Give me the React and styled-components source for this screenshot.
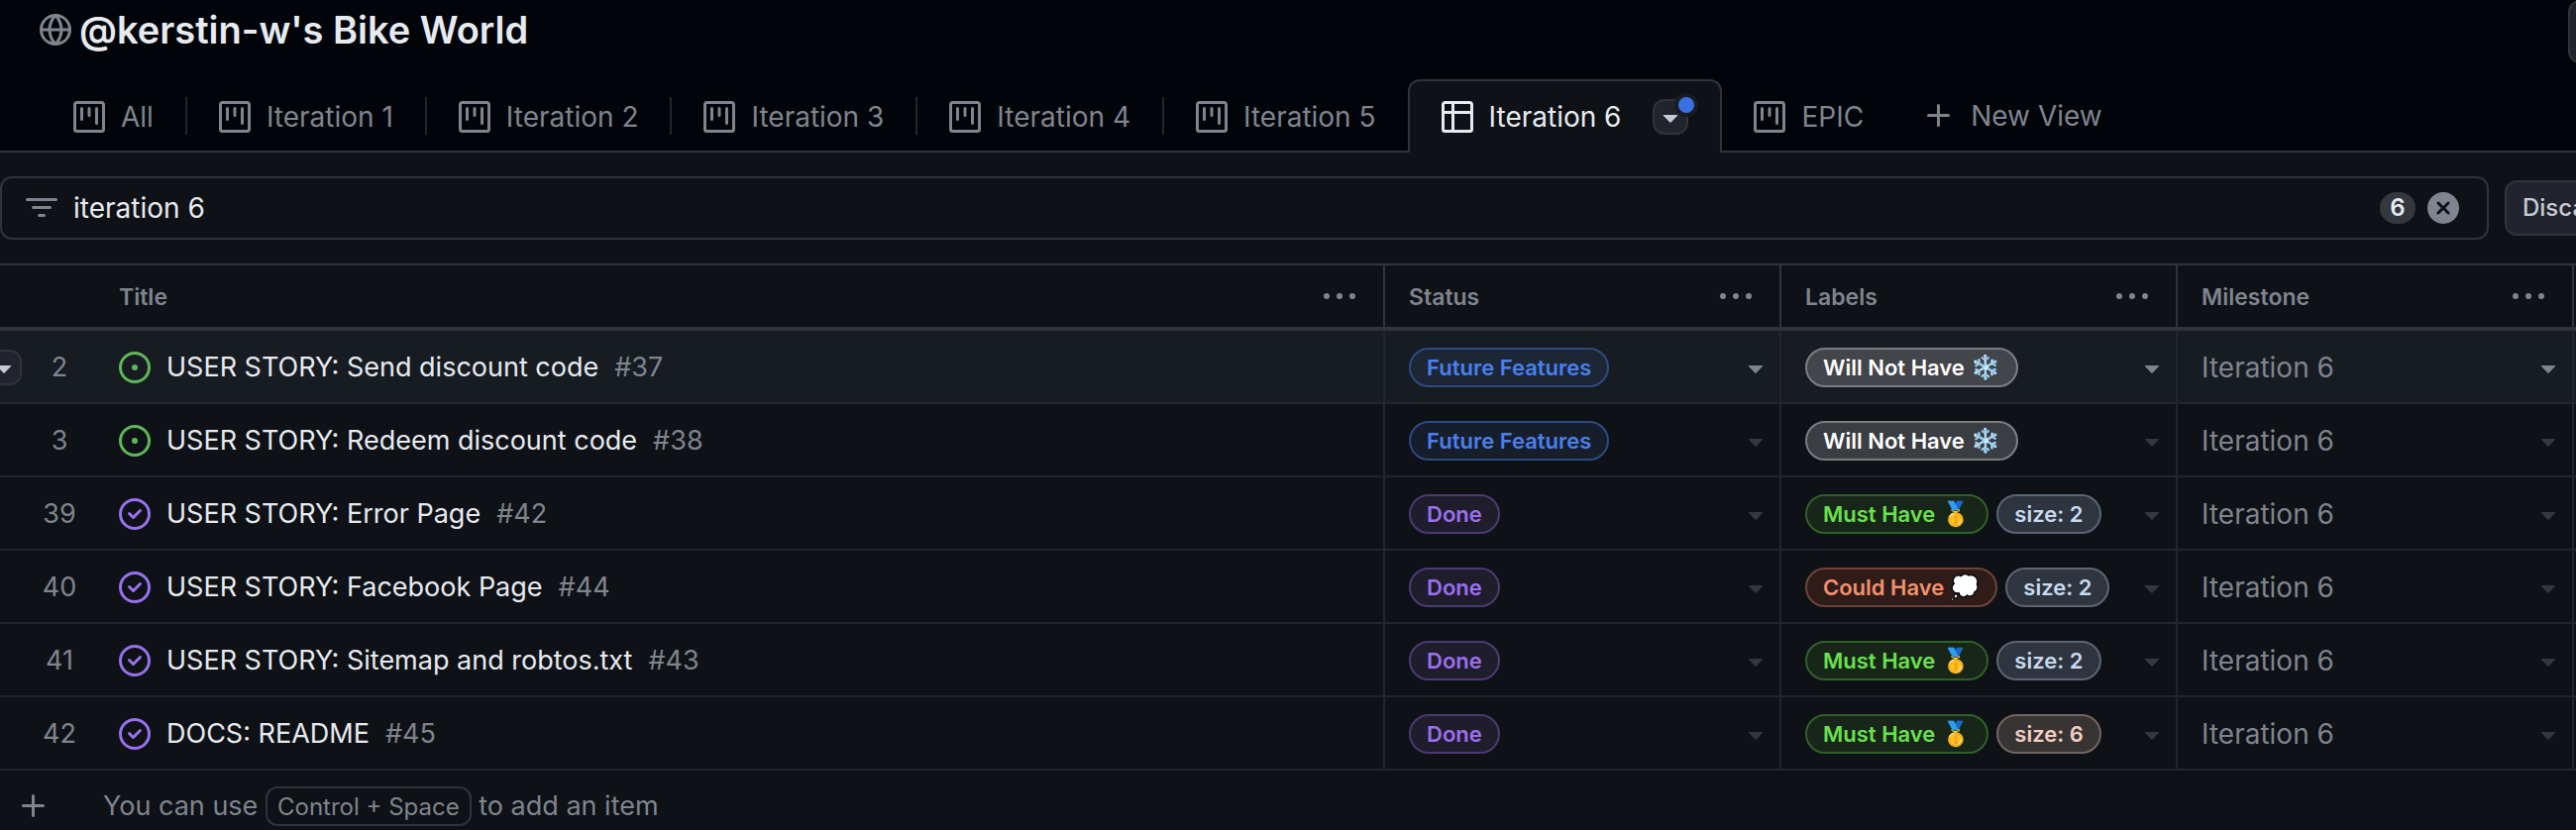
import React from "react";
import styled, { createGlobalStyle, css } from "styled-components";

const c = {
  header: "#010409",
  canvas: "#0e1116",
  subtle: "#171b22",
  button: "#21242c",
  border: "#30343a",
  rowBorder: "#222529",
  text: "#e7ebf0",
  muted: "#7f858e",
  faint: "#34383d",
};

const GlobalStyle = createGlobalStyle`
  *, *::before, *::after { box-sizing: border-box; }
  body {
    margin: 0;
    background: ${c.canvas};
    color: ${c.text};
    font-family: Inter, "Liberation Sans", sans-serif;
    font-size: 28px;
    line-height: 40px;
  }
  button, input { font: inherit; color: inherit; }
  button { cursor: pointer; }
`;

/* ---------- icons (16-unit grid) ---------- */

const Svg = styled.svg`
  display: block;
  flex: none;
  width: 32px;
  height: 32px;
  fill: currentColor;
`;

const paths = {
  globe:
    "M8 0a8 8 0 1 1 0 16A8 8 0 0 1 8 0ZM5.78 8.75a9.64 9.64 0 0 0 1.363 4.177c.255.426.542.832.857 1.215.245-.296.551-.705.857-1.215A9.64 9.64 0 0 0 10.22 8.75Zm4.44-1.5a9.64 9.64 0 0 0-1.363-4.177c-.307-.51-.612-.919-.857-1.215a9.927 9.927 0 0 0-.857 1.215A9.64 9.64 0 0 0 5.78 7.25Zm-5.944 1.5H1.543a6.507 6.507 0 0 0 4.666 5.5c-.123-.181-.24-.365-.352-.552-.715-1.192-1.437-2.874-1.581-4.948Zm-2.733-1.5h2.733c.144-2.074.866-3.756 1.58-4.948.12-.197.237-.381.353-.552a6.507 6.507 0 0 0-4.666 5.5Zm10.181 1.5c-.144 2.074-.866 3.756-1.58 4.948-.12.197-.237.381-.353.552a6.507 6.507 0 0 0 4.666-5.5Zm2.733-1.5a6.507 6.507 0 0 0-4.666-5.5c.123.181.24.365.353.552.714 1.192 1.436 2.874 1.58 4.948Z",
  project:
    "M1.75 0h12.5C15.216 0 16 .784 16 1.75v12.5A1.75 1.75 0 0 1 14.25 16H1.75A1.75 1.75 0 0 1 0 14.25V1.75C0 .784.784 0 1.75 0ZM1.5 1.75v12.5c0 .138.112.25.25.25h12.5a.25.25 0 0 0 .25-.25V1.75a.25.25 0 0 0-.25-.25H1.75a.25.25 0 0 0-.25.25ZM11.75 3a.75.75 0 0 1 .75.75v7.5a.75.75 0 0 1-1.5 0v-7.5a.75.75 0 0 1 .75-.75Zm-8.25.75a.75.75 0 0 1 1.5 0v5.5a.75.75 0 0 1-1.5 0ZM8 3a.75.75 0 0 1 .75.75v3.5a.75.75 0 0 1-1.5 0v-3.5A.75.75 0 0 1 8 3Z",
  table:
    "M0 1.75C0 .784.784 0 1.75 0h12.5C15.216 0 16 .784 16 1.75v12.5A1.75 1.75 0 0 1 14.25 16H1.75A1.75 1.75 0 0 1 0 14.25ZM6.5 6.5v8h7.75a.25.25 0 0 0 .25-.25V6.5Zm8-1.5V1.75a.25.25 0 0 0-.25-.25H6.5V5Zm-13 1.5v7.75c0 .138.112.25.25.25H5v-8ZM5 5V1.5H1.75a.25.25 0 0 0-.25.25V5Z",
  filter:
    "M.75 3h14.5a.75.75 0 0 1 0 1.5H.75a.75.75 0 0 1 0-1.5ZM3 7.75A.75.75 0 0 1 3.75 7h8.5a.75.75 0 0 1 0 1.5h-8.5A.75.75 0 0 1 3 7.75Zm3 4a.75.75 0 0 1 .75-.75h2.5a.75.75 0 0 1 0 1.5h-2.5a.75.75 0 0 1-.75-.75Z",
  kebab:
    "M8 9a1.5 1.5 0 1 0 0-3 1.5 1.5 0 0 0 0 3ZM1.5 9a1.5 1.5 0 1 0 0-3 1.5 1.5 0 0 0 0 3Zm13 0a1.5 1.5 0 1 0 0-3 1.5 1.5 0 0 0 0 3Z",
  triangle:
    "m4.427 7.427 3.396 3.396a.25.25 0 0 0 .354 0l3.396-3.396A.25.25 0 0 0 11.396 7H4.604a.25.25 0 0 0-.177.427Z",
  plus: "M7.75 2a.75.75 0 0 1 .75.75V7h4.25a.75.75 0 0 1 0 1.5H8.5v4.25a.75.75 0 0 1-1.5 0V8.5H2.75a.75.75 0 0 1 0-1.5H7V2.75A.75.75 0 0 1 7.75 2Z",
  open: "M8 9.5a1.5 1.5 0 1 0 0-3 1.5 1.5 0 0 0 0 3ZM8 0a8 8 0 1 1 0 16A8 8 0 0 1 8 0ZM1.5 8a6.5 6.5 0 1 0 13 0 6.5 6.5 0 0 0-13 0Z",
  closed:
    "M11.28 6.78a.75.75 0 0 0-1.06-1.06L7.25 8.69 5.78 7.22a.75.75 0 0 0-1.06 1.06l2 2a.75.75 0 0 0 1.06 0l3.5-3.5ZM16 8A8 8 0 1 1 0 8a8 8 0 0 1 16 0Zm-1.5 0a6.5 6.5 0 1 0-13 0 6.5 6.5 0 0 0 13 0Z",
  clear:
    "M2.343 13.657A8 8 0 1 1 13.658 2.343 8 8 0 0 1 2.343 13.657ZM6.03 4.97a.751.751 0 0 0-1.042.018.751.751 0 0 0-.018 1.042L6.94 8 4.97 9.97a.749.749 0 0 0 .326 1.275.749.749 0 0 0 .734-.215L8 9.06l1.97 1.97a.749.749 0 0 0 1.275-.326.749.749 0 0 0-.215-.734L9.06 8l1.97-1.97a.749.749 0 0 0-.326-1.275.749.749 0 0 0-.734.215L8 6.94Z",
};

const Icon = ({ name, label }) => (
  <Svg
    viewBox="0 0 16 16"
    role={label ? "img" : undefined}
    aria-label={label}
    aria-hidden={label ? undefined : true}
  >
    <path fillRule="evenodd" d={paths[name]} />
  </Svg>
);

/* ---------- page frame ---------- */

const Page = styled.div`
  display: flex;
  flex-direction: column;
  min-height: 100vh;
  overflow: hidden;
`;

const Header = styled.header`
  background: ${c.header};
`;

const TitleRow = styled.div`
  display: flex;
  align-items: flex-start;
  height: 64px;
`;

const TitleGroup = styled.div`
  display: flex;
  align-items: center;
  gap: 8px;
  flex: 0 0 calc(100% - 8px);
  padding-left: 40px;
  color: ${c.muted};
`;

const Title = styled.h1`
  margin: 0;
  color: ${c.text};
  font-size: 38px;
  line-height: 60px;
  font-weight: 600;
  white-space: nowrap;
`;

const buttonLook = css`
  border: 2px solid ${c.border};
  border-radius: 12px;
  background: ${c.button};
`;

const HeaderButton = styled.button`
  ${buttonLook}
  flex: none;
  width: 64px;
  height: 64px;
  padding: 0;
`;

const Tab = styled.a`
  display: flex;
  align-items: center;
  gap: 16px;
  flex: none;
  padding: 0 32px;
  color: ${c.muted};
  text-decoration: none;
  white-space: nowrap;
`;

const TabBar = styled.nav`
  display: flex;
  align-items: stretch;
  height: 90px;
  padding: 16px 0 0 42px;
  box-shadow: inset 0 -2px ${c.border};

  > ${Tab} {
    padding-top: 2px;
  }
`;

const Divider = styled.span`
  flex: none;
  align-self: center;
  width: 2px;
  height: 38px;
  background: ${c.rowBorder};
`;

const ActiveTab = styled.div`
  display: flex;
  align-items: center;
  flex: none;
  padding-right: 32px;
  border: 2px solid ${c.border};
  border-bottom: 0;
  border-radius: 12px 12px 0 0;
  background: ${c.canvas};

  ${Tab} {
    color: ${c.text};
  }
`;

const MenuButton = styled.button`
  ${buttonLook}
  display: flex;
  align-items: center;
  justify-content: center;
  position: relative;
  flex: none;
  width: 36px;
  height: 36px;
  padding: 0;
  color: #c6ccd4;
`;

const UnsavedDot = styled.span`
  position: absolute;
  top: -8px;
  right: -12px;
  width: 24px;
  height: 24px;
  border: 4px solid ${c.subtle};
  border-radius: 50%;
  background: #3a70e3;
`;

const NewView = styled.button`
  display: flex;
  align-items: center;
  gap: 16px;
  padding: 0 28px;
  border: 0;
  background: none;
  color: ${c.muted};
  white-space: nowrap;
`;

/* ---------- filter bar ---------- */

const FilterBar = styled.form`
  display: flex;
  align-items: center;
  gap: 16px;
  padding: 24px 0;
`;

const FilterBox = styled.div`
  display: flex;
  align-items: center;
  flex: 0 0 calc(100% - 88px);
  height: 64px;
  padding: 0 28px 0 24px;
  border: 2px solid ${c.border};
  border-radius: 12px;
  color: ${c.muted};
`;

const FilterInput = styled.input`
  flex: 1;
  min-width: 0;
  margin: 0 16px;
  padding: 0;
  border: 0;
  outline: 0;
  background: none;
  color: ${c.text};
`;

const Counter = styled.span`
  min-width: 36px;
  height: 32px;
  margin-right: 12px;
  border-radius: 16px;
  background: #34373e;
  color: ${c.text};
  font-size: 24px;
  font-weight: 600;
  line-height: 32px;
  text-align: center;
`;

const ClearButton = styled.button`
  flex: none;
  padding: 0;
  border: 0;
  background: none;
  color: ${c.muted};
`;

const DiscardButton = styled.button`
  ${buttonLook}
  flex: none;
  height: 56px;
  padding: 0 16px;
  color: #c6ccd4;
  font-size: 24px;
  font-weight: 500;
`;

/* ---------- table ---------- */

const Table = styled.table`
  width: 100%;
  table-layout: fixed;
  border-collapse: separate;
  border-spacing: 0;
`;

const Col = styled.col`
  width: ${(p) => p.$width};
`;

const HeadCell = styled.th`
  height: 68px;
  padding: 2px 28px 0 24px;
  border: 0 solid ${c.border};
  border-width: 2px ${(p) => (p.$plain ? 0 : 2)}px 4px 0;
  color: ${c.muted};
  font-size: 23px;
  line-height: 32px;
  font-weight: 600;
  text-align: left;
`;

const HeadContent = styled.div`
  display: flex;
  align-items: center;
  justify-content: space-between;
`;

const PlainButton = styled.button`
  flex: none;
  padding: 0;
  border: 0;
  background: none;
  color: ${(p) => p.$color || c.muted};
`;

const Cell = styled.td`
  height: 74px;
  padding: 2px 8px 0 24px;
  border: 0 solid ${c.rowBorder};
  border-width: 0 ${(p) => (p.$plain ? 0 : 2)}px 2px 0;
  white-space: nowrap;
`;

const NumberCell = styled(Cell)`
  position: relative;
  padding: 2px 0 0 24px;
  color: ${c.muted};
  font-size: 27px;
  text-align: center;
`;

const FillerCell = styled.td`
  padding: 0;
  border-bottom: 2px solid ${c.rowBorder};
`;

const Row = styled.tr`
  background: ${(p) => (p.$active ? c.subtle : "transparent")};
`;

const RowMenu = styled(MenuButton)`
  position: absolute;
  left: -14px;
  top: 19px;
`;

const TitleContent = styled.div`
  display: flex;
  align-items: center;
  gap: 16px;
  font-size: 27px;
  color: ${(p) => (p.$open ? "#5fb75a" : "#9a70ee")};
`;

const IssueLink = styled.a`
  color: ${c.text};
  text-decoration: none;
`;

const Muted = styled.span`
  color: ${c.muted};
`;

const CellContent = styled.div`
  display: flex;
  align-items: center;
  gap: 8px;
`;

const Push = styled.span`
  flex: 1;
`;

const tones = {
  blue: ["#4a80ee", "#2d4b80", "#161d2b"],
  blueActive: ["#4a80ee", "#2d4b80", "#1d2634"],
  purple: ["#9a70ee", "#4b3a74", "#1f1c2b"],
  gray: ["#ffffff", "#7b7d80", "#3a3d42"],
  grayActive: ["#ffffff", "#7b7d80", "#424549"],
  green: ["#68e24c", "#2f6128", "#182519"],
  orange: ["#f0916f", "#6d4436", "#2f1c19"],
  slate: ["#c9daf0", "#5b6573", "#2e353e"],
  peach: ["#f1cfc3", "#746462", "#383433"],
};

const Pill = styled.span`
  display: inline-flex;
  align-items: center;
  gap: 6px;
  height: 40px;
  padding: 0 16px;
  border: 2px solid ${(p) => tones[p.$tone][1]};
  border-radius: 20px;
  background: ${(p) => tones[p.$tone][2]};
  color: ${(p) => tones[p.$tone][0]};
  font-size: 22px;
  line-height: 36px;
  font-weight: 600;
`;

const Emoji = styled.span`
  font-size: 24px;
`;

/* ---------- add-item row ---------- */

const AddRow = styled.div`
  display: flex;
  align-items: center;
  height: 72px;
  padding: 0 18px;
  color: ${c.muted};
  font-size: 27px;
`;

const Hint = styled.p`
  margin: 0 0 0 54px;
`;

const Key = styled.kbd`
  display: inline-block;
  height: 40px;
  padding: 0 10px;
  border: 2px solid ${c.border};
  border-radius: 12px;
  font-family: inherit;
  font-size: 24px;
  line-height: 38px;
  vertical-align: top;
`;

const boards = ["All", "Iteration 1", "Iteration 2", "Iteration 3", "Iteration 4", "Iteration 5"];

const mustHave = { text: "Must Have", emoji: "🥇", tone: "green" };
const couldHave = { text: "Could Have", emoji: "💭", tone: "orange" };
const wontHave = { text: "Will Not Have", emoji: "❄️", tone: "gray" };
const size2 = { text: "size: 2", tone: "slate" };
const size6 = { text: "size: 6", tone: "peach" };

const items = [
  { n: 2, title: "USER STORY: Send discount code", id: "#37", open: true, labels: [{ ...wontHave, tone: "grayActive" }], active: true },
  { n: 3, title: "USER STORY: Redeem discount code", id: "#38", open: true, labels: [wontHave] },
  { n: 39, title: "USER STORY: Error Page", id: "#42", labels: [mustHave, size2] },
  { n: 40, title: "USER STORY: Facebook Page", id: "#44", labels: [couldHave, size2] },
  { n: 41, title: "USER STORY: Sitemap and robtos.txt", id: "#43", labels: [mustHave, size2] },
  { n: 42, title: "DOCS: README", id: "#45", labels: [mustHave, size6] },
];

const columns = ["Title", "Status", "Labels", "Milestone"];

const EditableCell = ({ field, active, children }) => (
  <Cell>
    <CellContent>
      {children}
      <Push />
      <PlainButton type="button" aria-label={`Edit ${field}`} $color={active ? c.muted : c.faint}>
        <Icon name="triangle" />
      </PlainButton>
    </CellContent>
  </Cell>
);

const ItemRow = ({ item }) => (
  <Row $active={item.active}>
    <NumberCell $plain>
      {item.active && (
        <RowMenu type="button" aria-label="Row actions">
          <Icon name="triangle" />
        </RowMenu>
      )}
      {item.n}
    </NumberCell>
    <Cell>
      <TitleContent $open={item.open}>
        <Icon name={item.open ? "open" : "closed"} label={item.open ? "Open" : "Closed"} />
        <IssueLink href="#issue">{item.title}</IssueLink>
        <Muted>{item.id}</Muted>
      </TitleContent>
    </Cell>
    <EditableCell field="Status" active={item.active}>
      <Pill $tone={item.open ? (item.active ? "blueActive" : "blue") : "purple"}>
        {item.open ? "Future Features" : "Done"}
      </Pill>
    </EditableCell>
    <EditableCell field="Labels" active={item.active}>
      {item.labels.map((l) => (
        <Pill key={l.text} $tone={l.tone}>
          {l.text}
          {l.emoji && <Emoji>{l.emoji}</Emoji>}
        </Pill>
      ))}
    </EditableCell>
    <EditableCell field="Milestone" active={item.active}>
      <Muted>Iteration 6</Muted>
    </EditableCell>
    <FillerCell />
  </Row>
);

export default function App() {
  return (
    <Page>
      <GlobalStyle />
      <Header>
        <TitleRow>
          <TitleGroup>
            <Icon name="globe" />
            <Title>@kerstin-w's Bike World</Title>
          </TitleGroup>
          <HeaderButton type="button" aria-label="Project details" />
        </TitleRow>
        <TabBar aria-label="Views">
          {boards.map((name, i) => (
            <React.Fragment key={name}>
              <Tab href="#view">
                <Icon name="project" />
                {name}
              </Tab>
              {i < boards.length - 1 && <Divider />}
            </React.Fragment>
          ))}
          <ActiveTab>
            <Tab href="#view" aria-current="page">
              <Icon name="table" />
              Iteration 6
            </Tab>
            <MenuButton type="button" aria-label="View options">
              <Icon name="triangle" />
              <UnsavedDot />
            </MenuButton>
          </ActiveTab>
          <Tab href="#view">
            <Icon name="project" />
            EPIC
          </Tab>
          <NewView type="button">
            <Icon name="plus" />
            New View
          </NewView>
        </TabBar>
      </Header>
      <main>
        <FilterBar>
          <FilterBox>
            <Icon name="filter" />
            <FilterInput aria-label="Filter items" defaultValue="iteration 6" />
            <Counter>6</Counter>
            <ClearButton type="button" aria-label="Clear filter">
              <Icon name="clear" />
            </ClearButton>
          </FilterBox>
          <DiscardButton type="button">Discard</DiscardButton>
        </FilterBar>
        <Table>
          <colgroup>
            <Col $width="96px" />
            <Col $width="auto" />
            <Col $width="400px" />
            <Col $width="400px" />
            <Col $width="400px" />
            <Col $width="2px" />
          </colgroup>
          <thead>
            <tr>
              <HeadCell as="td" $plain />
              {columns.map((name) => (
                <HeadCell key={name} scope="col">
                  <HeadContent>
                    {name}
                    <PlainButton type="button" aria-label={`${name} column options`}>
                      <Icon name="kebab" />
                    </PlainButton>
                  </HeadContent>
                </HeadCell>
              ))}
              <HeadCell as="td" $plain />
            </tr>
          </thead>
          <tbody>
            {items.map((item) => (
              <ItemRow key={item.n} item={item} />
            ))}
          </tbody>
        </Table>
        <AddRow>
          <PlainButton type="button" aria-label="Add item">
            <Icon name="plus" />
          </PlainButton>
          <Hint>
            You can use <Key>Control + Space</Key> to add an item
          </Hint>
        </AddRow>
      </main>
    </Page>
  );
}
